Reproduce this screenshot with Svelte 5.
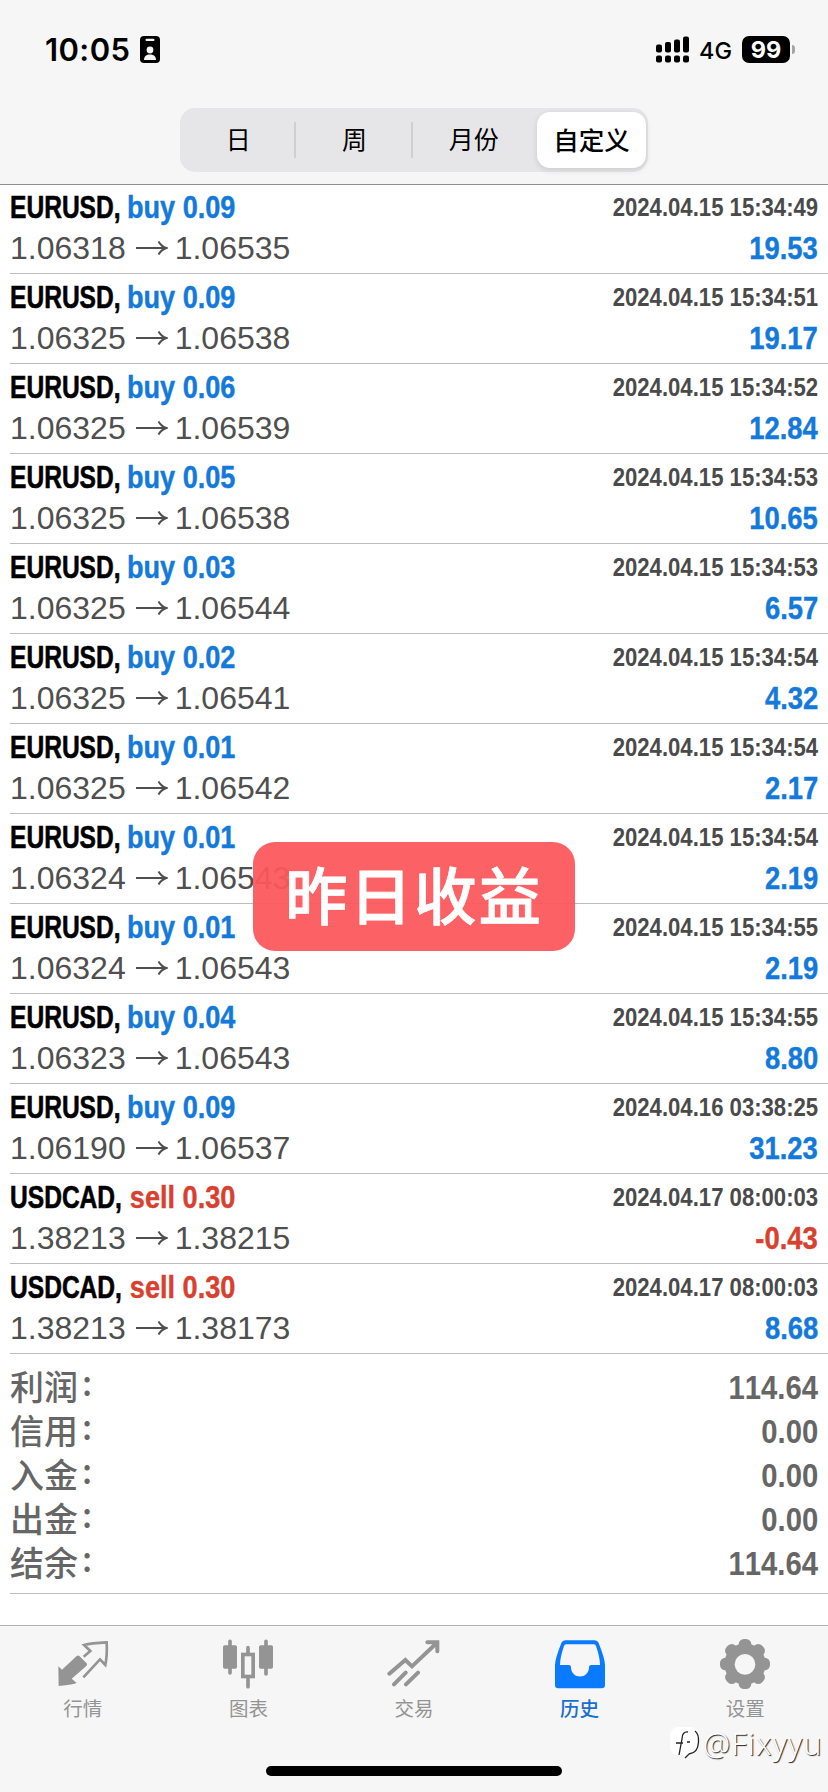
<script lang="ts">
  interface Deal {
      symbol: string;
      side: 'buy' | 'sell';
      volume: string;
      open: string;
      close: string;
      time: string;
      profit: string;
  }

  function deal(symbol: string, side: Deal['side'], volume: string, open: string, close: string, time: string, profit: string): Deal {
      return { symbol, side, volume, open, close, time, profit };
  }

  const deals: Deal[] = [
      deal('EURUSD', 'buy', '0.09', '1.06318', '1.06535', '2024.04.15 15:34:49', '19.53'),
      deal('EURUSD', 'buy', '0.09', '1.06325', '1.06538', '2024.04.15 15:34:51', '19.17'),
      deal('EURUSD', 'buy', '0.06', '1.06325', '1.06539', '2024.04.15 15:34:52', '12.84'),
      deal('EURUSD', 'buy', '0.05', '1.06325', '1.06538', '2024.04.15 15:34:53', '10.65'),
      deal('EURUSD', 'buy', '0.03', '1.06325', '1.06544', '2024.04.15 15:34:53', '6.57'),
      deal('EURUSD', 'buy', '0.02', '1.06325', '1.06541', '2024.04.15 15:34:54', '4.32'),
      deal('EURUSD', 'buy', '0.01', '1.06325', '1.06542', '2024.04.15 15:34:54', '2.17'),
      deal('EURUSD', 'buy', '0.01', '1.06324', '1.06543', '2024.04.15 15:34:54', '2.19'),
      deal('EURUSD', 'buy', '0.01', '1.06324', '1.06543', '2024.04.15 15:34:55', '2.19'),
      deal('EURUSD', 'buy', '0.04', '1.06323', '1.06543', '2024.04.15 15:34:55', '8.80'),
      deal('EURUSD', 'buy', '0.09', '1.06190', '1.06537', '2024.04.16 03:38:25', '31.23'),
      deal('USDCAD', 'sell', '0.30', '1.38213', '1.38215', '2024.04.17 08:00:03', '-0.43'),
      deal('USDCAD', 'sell', '0.30', '1.38213', '1.38173', '2024.04.17 08:00:03', '8.68'),
  ];

  const summary = [
      { label: '利润', value: '114.64' },
      { label: '信用', value: '0.00' },
      { label: '入金', value: '0.00' },
      { label: '出金', value: '0.00' },
      { label: '结余', value: '114.64' },
  ];

  const periods = ['日', '周', '月份', '自定义'];
  let period = $state('自定义');

  const tabs = [
      { id: 'quotes', label: '行情' },
      { id: 'charts', label: '图表' },
      { id: 'trade', label: '交易' },
      { id: 'history', label: '历史' },
      { id: 'settings', label: '设置' },
  ];
  let tab = $state('history');
</script>

<div class="screen">
  <header>
    <div class="status">
      <div class="status-left">
        <span class="clock">10:05</span>
        <svg class="badge" viewBox="0 0 20 27">
          <rect width="20" height="27" rx="4" />
          <rect x="5.5" y="2.8" width="9" height="2.2" rx="1.1" fill="#f6f6f6" />
          <circle cx="10" cy="14" r="3.4" fill="#f6f6f6" />
          <path d="M4 24c0-4 2.600-5.600 6-5.600s6 1.600 6 5.600z" fill="#f6f6f6" />
        </svg>
      </div>
      <div class="status-right">
        <svg class="signal" viewBox="0 0 34 27">
          <rect x="0" y="8.500" width="6" height="8" rx="2" />
          <rect x="9" y="6" width="6" height="10.500" rx="2" />
          <rect x="18" y="3.500" width="6" height="13" rx="2" />
          <rect x="27" y="0.500" width="6" height="16" rx="2" />
          {#each [0, 9, 18, 27] as x}
            <rect {x} y="19.500" width="6" height="7" rx="2" />
          {/each}
        </svg>
        <span class="network">4G</span>
        <span class="battery">99</span>
        <span class="battery-cap"></span>
      </div>
    </div>
    <div class="segments">
      {#each periods as name}
        <button class="segment" class:selected={period === name} onclick={() => (period = name)}>{name}</button>
      {/each}
    </div>
  </header>

  <main>
    {#each deals as d}
      <div class="deal">
        <div class="left">
          <div class="title">
            <span class="symbol">{d.symbol},</span>
            <span class="side {d.side}">{d.side} {d.volume}</span>
          </div>
          <div class="prices">
            <span>{d.open}</span>
            <svg class="arrow" viewBox="0 0 32 16">
              <path d="M0 8H30M22.500 1.500C24.500 5 27 7 30.500 8C27 9 24.500 11 22.500 14.500" />
            </svg>
            <span>{d.close}</span>
          </div>
        </div>
        <div class="right">
          <span class="time">{d.time}</span>
          <span class="profit" class:loss={d.profit.startsWith('-')}>{d.profit}</span>
        </div>
      </div>
    {/each}

    <div class="summary">
      {#each summary as s}
        <div class="total">
          <span class="label">{s.label}<i class="colon">:</i></span>
          <span class="value">{s.value}</span>
        </div>
      {/each}
    </div>
  </main>

  <footer>
    <nav>
      {#each tabs as t}
        <button class="tab" class:active={tab === t.id} onclick={() => (tab = t.id)}>
          <svg viewBox="0 0 162 162">
            {#if t.id === 'quotes'}
              <path class="fill" d="M7 88L18 98L62 57Q66 54 70 57L92 79Q95 83 91 87L47 125L62 138Q54 143 8 147Z" />
              <path class="line" stroke-width="8" d="M83 59L103 42L84 24Q105 18 152 16Q154 55 148 84L132 67L82 121" />
            {:else if t.id === 'charts'}
              <path class="line" stroke-width="11" stroke-linecap="round" d="M27 13V108M81 32V48M81 125V149M135 13V111" />
              <rect class="fill" x="6" y="25" width="42" height="70" rx="5" />
              <rect class="fill" x="114" y="25" width="42" height="70" rx="5" />
              <rect class="line" x="65.500" y="52.500" width="31" height="66" stroke-width="11" />
            {:else if t.id === 'trade'}
              <path class="line" stroke-width="12" stroke-linecap="round" d="M7 110L55 69L75 88L149 18M121 16H151V43M21 142L56 107M57 142L93 107" />
            {:else if t.id === 'history'}
              <path class="fill" fill-rule="evenodd" d="M37 10H125Q134 10 137 18Q156 66 156 84V144Q156 154 146 154H16Q6 154 6 144V84Q6 66 25 18Q28 10 37 10ZM39 22Q35 22 33 27Q21 62 21 84H47Q54 84 54 90C54 128 108 128 108 90Q108 84 115 84H141Q141 62 129 27Q127 22 123 22Z" />
            {:else}
              {#each [0, 45, 90, 135] as a}
                <rect class="fill" x="62" y="6" width="38" height="150" rx="16" transform="rotate({a} 81 81)" />
              {/each}
              <circle class="fill" cx="81" cy="81" r="62" />
              <circle cx="81" cy="82" r="31" fill="#f6f6f6" />
            {/if}
          </svg>
          <span>{t.label}</span>
        </button>
      {/each}
    </nav>
    <div class="home-bar"></div>
  </footer>

  <div class="toast">昨日收益</div>

  <div class="watermark">
    <svg viewBox="0 0 30 32">
      <path d="M8 0H20Q29 0 29 10V16Q29 27 19 28L15 31L14 28H8Q0 28 0 18V10Q0 0 8 0Z" fill="#fff" />
      <path d="M18 5Q12 4.500 12 12L9 28M6 16H13M17 15H20M25 4Q29 7 28.500 15Q28 26 19 27L15 31" fill="none" stroke="#222" stroke-width="1.300" />
    </svg>
    <span>@Fixyyu</span>
  </div>
</div>

<style>
  :global(body) {
      margin: 0;
      background: #fff;
  }

  .screen {
      position: relative;
      display: flex;
      flex-direction: column;
      width: 828px;
      height: 1792px;
      overflow: hidden;
      background: #fff;
      font-family: "Liberation Sans", "Noto Sans CJK SC", sans-serif;
      font-kerning: none;
  }

  button {
      padding: 0;
      border: 0;
      background: none;
      font-family: "Noto Sans CJK SC", sans-serif;
  }

  header {
      box-sizing: border-box;
      height: 185px;
      flex: none;
      background: #f6f6f6;
      border-bottom: 1px solid #8f8f8f;
  }

  .status {
      display: flex;
      justify-content: space-between;
      align-items: center;
      height: 99px;
      padding: 0 33px 0 45px;
      font-family: Inter, sans-serif;
  }

  .status-left,
  .status-right {
      display: flex;
      align-items: center;
  }

  .clock {
      width: 95px;
      font-size: 31px;
      font-weight: 600;
      letter-spacing: 0.4px;
      white-space: nowrap;
  }

  .badge {
      width: 20px;
      height: 27px;
  }

  .signal {
      width: 34px;
      height: 27px;
      margin-right: 9px;
  }

  .network {
      width: 43px;
      font-size: 23.5px;
      font-weight: 500;
      padding-top: 2px;
      white-space: nowrap;
  }

  .battery {
      width: 48px;
      height: 27px;
      border-radius: 7px;
      background: #000;
      color: #fff;
      font-size: 23.5px;
      font-weight: 700;
      line-height: 27px;
      text-align: center;
  }

  .battery-cap {
      width: 3px;
      height: 9px;
      margin-left: 2px;
      border-radius: 0 4px 4px 0;
      background: #a5a5a5;
  }

  .segments {
      display: flex;
      box-sizing: border-box;
      width: 468px;
      height: 64px;
      margin: 9px 0 0 180px;
      border-radius: 15px;
      background: #e6e6e8;
  }

  .segment {
      display: flex;
      flex: 1;
      align-items: center;
      justify-content: center;
      margin: 4px 0;
      padding-bottom: 4px;
      font-size: 25px;
      color: #000;
      background: linear-gradient(#cfcfd1, #cfcfd1) right center / 2px 36px no-repeat;
  }

  .segment:nth-child(3) {
      padding-left: 3px;
      background: none;
  }

  .segment.selected {
      flex: none;
      width: 109px;
      margin: 4px 2px 4px 5px;
      border-radius: 13px;
      background: #fff;
      box-shadow: 0 2px 6px rgba(0, 0, 0, 0.12);
      font-size: 25.5px;
      font-weight: 500;
  }

  main {
      flex: none;
      height: 1441px;
      margin-top: -1px;
      padding-left: 10px;
  }

  .deal {
      display: flex;
      justify-content: space-between;
      box-sizing: border-box;
      height: 90px;
      padding-right: 10px;
      border-bottom: 1px solid #bdbdbd;
      white-space: nowrap;
  }

  .left {
      padding-top: 3px;
  }

  .title {
      display: flex;
      height: 41px;
      font-size: 31.5px;
      font-weight: 700;
      line-height: 41px;
  }

  /* squeezed to a condensed bold face */
  .symbol,
  .side,
  .time,
  .profit,
  .value {
      display: block;
      transform-origin: left center;
  }

  .symbol {
      margin-right: -25px;
      transform: scaleX(0.78);
      -webkit-text-stroke: 0.6px currentColor;
  }

  .side {
      transform: scaleX(0.86);
  }

  .sell {
      padding-left: 1px;
  }

  .side,
  .profit {
      -webkit-text-stroke: 0.4px currentColor;
  }

  .buy,
  .profit {
      color: #1379da;
  }

  .sell,
  .profit.loss {
      color: #d8412f;
  }

  .prices {
      display: flex;
      align-items: center;
      height: 41px;
      font-size: 32px;
      line-height: 41px;
      color: #4f4f4f;
  }

  .arrow {
      width: 32px;
      height: 16px;
      margin: 0 7px 1px 10px;
      fill: none;
      stroke: #4f4f4f;
      stroke-width: 2;
  }

  .right {
      display: flex;
      flex-direction: column;
      align-items: flex-end;
      padding-top: 3px;
      font-weight: 700;
      line-height: 41px;
  }

  .time,
  .profit,
  .value {
      transform-origin: right center;
  }

  .time {
      font-size: 25px;
      color: #4a4a4a;
      transform: scaleX(0.885);
  }

  .profit {
      font-size: 31.5px;
      transform: scaleX(0.87);
  }

  .summary {
      box-sizing: border-box;
      height: 240px;
      padding: 11px 10px 0 0;
      border-bottom: 1px solid #bdbdbd;
  }

  .total {
      display: flex;
      justify-content: space-between;
      height: 44px;
      line-height: 44px;
      font-size: 34px;
      color: #666;
  }

  .label {
      display: flex;
      margin-top: -1px;
      font-family: "Noto Sans CJK SC", sans-serif;
      font-weight: 500;
  }

  .colon {
      margin: -4px 0 0 4px;
      font-style: normal;
  }

  .value {
      font-weight: 700;
      transform: scaleX(0.86);
  }

  footer {
      box-sizing: border-box;
      flex: 1;
      border-top: 1px solid #b0b0b0;
      background: #f6f6f6;
  }

  nav {
      display: flex;
      height: 140px;
  }

  .tab {
      display: flex;
      flex: 1;
      flex-direction: column;
      align-items: center;
      padding-top: 11px;
      font-size: 19.5px;
      line-height: 34px;
      color: #949494;
  }

  .tab svg {
      width: 54px;
      height: 54px;
  }

  .tab.active {
      color: #0a7aff;
  }

  .tab.active span {
      color: #1a6fd0;
      font-weight: 500;
  }

  .fill {
      fill: currentColor;
  }

  .line {
      fill: none;
      stroke: currentColor;
  }

  .home-bar {
      width: 296px;
      height: 10px;
      margin: 0 auto;
      border-radius: 5px;
      background: #000;
  }

  .toast {
      position: absolute;
      top: 842px;
      left: 253px;
      width: 322px;
      height: 109px;
      box-sizing: border-box;
      border-radius: 22px;
      background: rgba(252, 88, 91, 0.94);
      color: #fff;
      font-family: "Noto Sans CJK SC", sans-serif;
      font-size: 62.5px;
      font-weight: 500;
      -webkit-text-stroke: 0.8px #fff;
      letter-spacing: 2px;
      line-height: 101px;
      text-align: center;
  }

  .watermark {
      position: absolute;
      top: 1725px;
      left: 670px;
      display: flex;
      align-items: center;
      color: #fff;
      font-family: "Noto Sans", sans-serif;
      font-size: 30.5px;
      font-weight: 300;
      letter-spacing: 1.1px;
      line-height: 36px;
      text-shadow: 1px 1px 1px #222;
      white-space: nowrap;
  }

  .watermark svg {
      width: 30px;
      height: 32px;
      margin-right: 3px;
  }
</style>
